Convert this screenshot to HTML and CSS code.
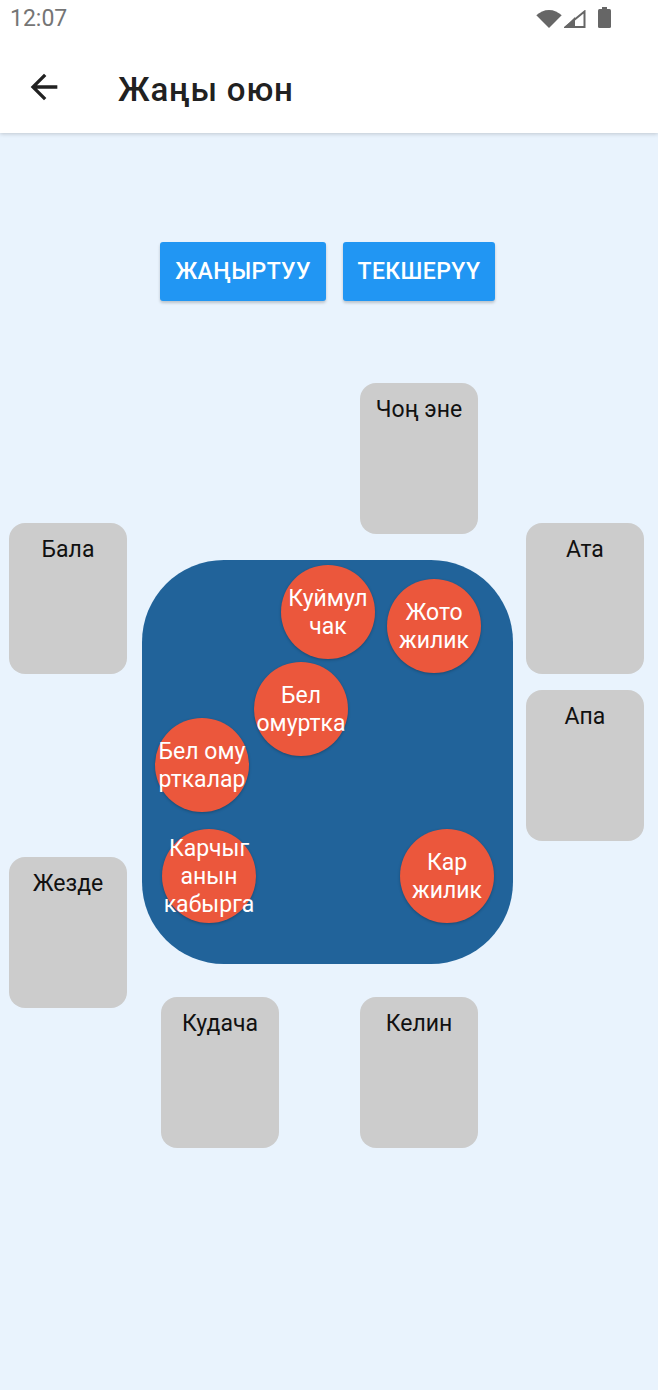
FILE: index.html
```html
<!DOCTYPE html>
<html lang="ky">
<head>
<meta charset="utf-8">
<title>Жаңы оюн</title>
<link rel="stylesheet" href="styles.css">
</head>
<body>
<div class="screen">
  <header class="appbar">
    <div class="statusbar">
      <span class="clock">12:07</span>
      <div class="status-icons">
        <svg class="ic-wifi" width="26" height="18" viewBox="0 0 26 18"><path d="M13 18 L0.3 5.3 A18 18 0 0 1 25.7 5.3 Z" fill="#666"/></svg>
        <svg class="ic-signal" width="22" height="18" viewBox="0 0 22 18"><path d="M1.5 17 L20.5 17 L20.5 1.5 Z" fill="none" stroke="#666" stroke-width="2" stroke-linejoin="miter"/><path d="M0 18 L11 18 L11 7 Z" fill="#666"/></svg>
        <svg class="ic-battery" width="13" height="21" viewBox="0 0 13 21"><rect x="4" y="0" width="5" height="3" fill="#666"/><rect x="0" y="2" width="13" height="19" rx="1.5" fill="#666"/></svg>
      </div>
    </div>
    <div class="toolbar">
      <svg class="back" width="40" height="40" viewBox="0 0 24 24"><path d="M20 11H7.83l5.59-5.59L12 4l-8 8 8 8 1.41-1.41L7.83 13H20v-2z" fill="#212121"/></svg>
      <h1 class="title">Жаңы оюн</h1>
    </div>
  </header>

  <main class="content">
    <div class="actions">
      <button class="btn btn-reset">ЖАҢЫРТУУ</button>
      <button class="btn btn-check">ТЕКШЕРҮҮ</button>
    </div>

    <div class="table-area">
      <div class="card" style="left:360px;top:23px">Чоң эне</div>
      <div class="card" style="left:9px;top:163px">Бала</div>
      <div class="card" style="left:526px;top:163px">Ата</div>
      <div class="card" style="left:526px;top:330px">Апа</div>
      <div class="card" style="left:9px;top:497px">Жезде</div>
      <div class="card" style="left:161px;top:637px">Кудача</div>
      <div class="card" style="left:360px;top:637px">Келин</div>

      <div class="board">
        <div class="piece" style="left:139px;top:5px">Куймул<br>чак</div>
        <div class="piece" style="left:245px;top:19px">Жото<br>жилик</div>
        <div class="piece" style="left:112px;top:102px">Бел<br>омуртка</div>
        <div class="piece" style="left:13px;top:158px">Бел ому<br>рткалар</div>
        <div class="piece" style="left:20px;top:269px">Карчыг<br>анын<br>кабырга</div>
        <div class="piece" style="left:258px;top:269px">Кар<br>жилик</div>
      </div>
    </div>
  </main>
</div>
</body>
</html>
```
FILE: styles.css
```css
* { box-sizing: border-box; }
html, body {
  margin: 0;
  padding: 0;
}
body {
  width: 658px;
  height: 1390px;
  background: #e9f3fd;
  font-family: Roboto, "Noto Sans", sans-serif;
  overflow: hidden;
}
.screen {
  display: flex;
  flex-direction: column;
  height: 1390px;
}
.appbar {
  background: #ffffff;
  box-shadow: 0 1px 4px rgba(0,0,0,0.18);
  position: relative;
  z-index: 2;
}
.statusbar {
  height: 40px;
  display: flex;
  align-items: center;
  justify-content: space-between;
  padding: 0 47px 0 10px;
}
.clock {
  font-size: 23px;
  color: #757575;
  margin-top: -4px;
}
.status-icons {
  display: flex;
  align-items: flex-end;
  gap: 2px;
  height: 21px;
  margin-top: -5px;
}
.ic-battery { margin-left: 10px; }
.toolbar {
  height: 93px;
  display: flex;
  align-items: center;
  padding-left: 24px;
}
.back { display: block; }
.title {
  margin: 5px 0 0 54px;
  font-size: 33px;
  font-weight: 500;
  color: #212121;
  letter-spacing: 0.8px;
}
.content {
  flex: 1;
  background: #e9f3fd;
}
.actions {
  display: flex;
  justify-content: center;
  gap: 17px;
  padding-top: 109px;
  padding-right: 3px;
}
.btn {
  height: 59px;
  border: none;
  border-radius: 3px;
  background: #2196f3;
  color: #ffffff;
  font-family: Roboto, sans-serif;
  font-size: 23px;
  font-weight: 500;
  letter-spacing: 0.4px;
  box-shadow: 0 2px 3px rgba(0,0,0,0.2);
  padding: 0;
}
.btn-reset { width: 166px; }
.btn-check { width: 152px; }
.table-area {
  position: relative;
  margin-top: 59px;
  height: 800px;
}
.card {
  position: absolute;
  width: 118px;
  height: 151px;
  border-radius: 16px;
  background: #cccccc;
  color: #111111;
  font-size: 23px;
  text-align: center;
  padding-top: 13px;
  line-height: 27px;
}
.board {
  position: absolute;
  left: 142px;
  top: 200px;
  width: 371px;
  height: 404px;
  border-radius: 82px;
  background: #21639a;
}
.piece {
  position: absolute;
  width: 94px;
  height: 94px;
  border-radius: 50%;
  background: #eb573c;
  color: #ffffff;
  font-size: 23px;
  line-height: 28px;
  padding-top: 2px;
  display: flex;
  align-items: center;
  justify-content: center;
  text-align: center;
  white-space: nowrap;
  box-shadow: 0 1px 3px rgba(0,0,0,0.25);
}
```
